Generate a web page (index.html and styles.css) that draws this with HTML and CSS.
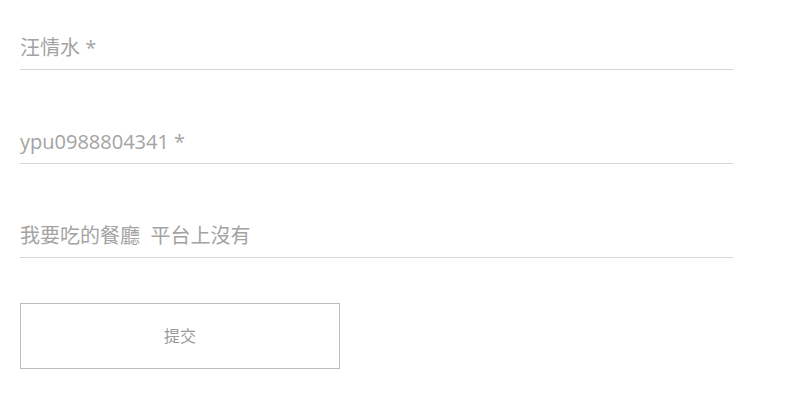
FILE: index.html
```html
<!DOCTYPE html>
<html lang="zh-Hant">
<head>
<meta charset="utf-8">
<link rel="stylesheet" href="styles.css">
</head>
<body>
<form class="form">
  <div class="fields">
    <div class="field">汪情水 *</div>
    <div class="field">ypu0988804341 *</div>
    <div class="field">我要吃的餐廳&nbsp;&nbsp;平台上沒有</div>
  </div>
  <button type="button" class="submit">提交</button>
</form>
</body>
</html>
```
FILE: styles.css
```css
html, body {
  margin: 0;
  background: #fff;
}
.form {
  padding: 35px 0 0 20px;
  width: 713px;
  font-family: "Open Sans", "Noto Sans CJK TC", sans-serif;
}
.fields {
  display: flex;
  flex-direction: column;
  gap: 59px;
}
.field {
  font-size: 20px;
  line-height: 26px;
  color: #a3a3a3;
  padding-bottom: 8px;
  border-bottom: 1px solid #d6d6d6;
}
.submit {
  display: block;
  margin-top: 45px;
  width: 320px;
  height: 66px;
  background: #fff;
  border: 1px solid #bdbdbd;
  font-family: "Open Sans", "Noto Sans CJK TC", sans-serif;
  font-size: 16px;
  line-height: 20px;
  color: #9a9a9a;
  padding: 0;
}
```
